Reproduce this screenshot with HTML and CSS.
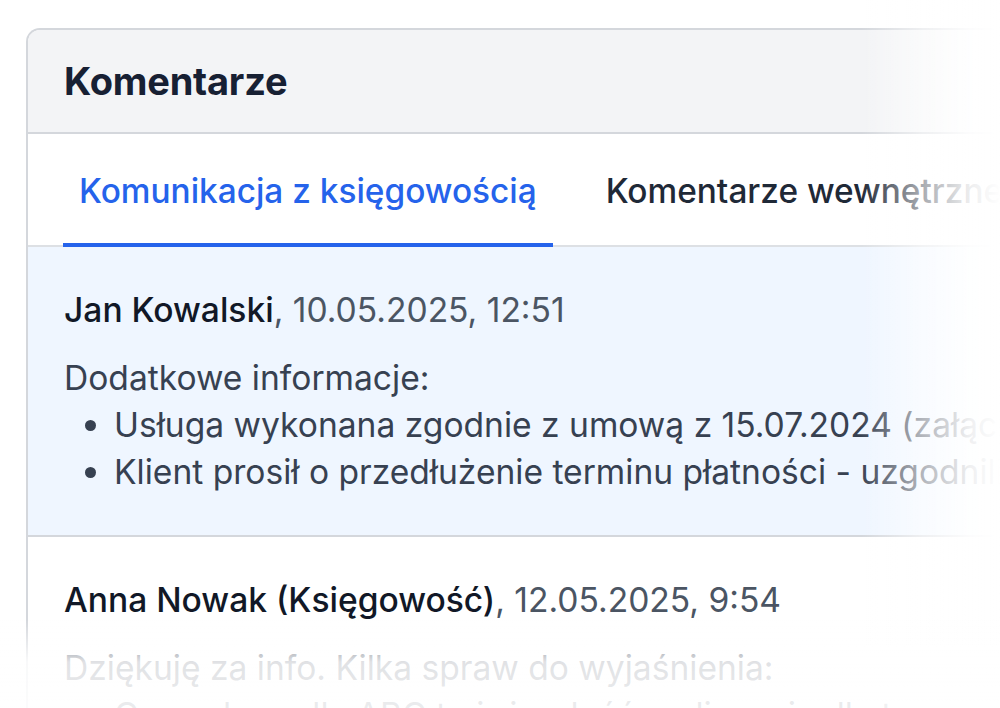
FILE: index.html
```html
<!DOCTYPE html>
<html lang="pl">
<head>
<meta charset="utf-8">
<title>Komentarze</title>
<link rel="stylesheet" href="styles.css">
</head>
<body>
<div class="page">
  <section class="card">
    <header class="card-header">
      <h2 class="title">Komentarze</h2>
    </header>
    <nav class="tabs">
      <div class="tab active">Komunikacja z księgowością</div>
      <div class="tab">Komentarze wewnętrzne</div>
    </nav>
    <div class="comments">
      <article class="comment highlighted">
        <p class="meta"><span class="author">Jan Kowalski</span>, 10.05.2025, 12:51</p>
        <div class="body">
          <p>Dodatkowe informacje:</p>
          <ul>
            <li>Usługa wykonana zgodnie z umową z 15.07.2024 (załącznik w dokumentach)</li>
            <li>Klient prosił o przedłużenie terminu płatności - uzgodniliśmy 30 dni</li>
          </ul>
        </div>
      </article>
      <article class="comment">
        <p class="meta"><span class="author">Anna Nowak (Księgowość)</span>, 12.05.2025, 9:54</p>
        <div class="body">
          <p>Dziękuję za info. Kilka spraw do wyjaśnienia:</p>
          <ul>
            <li>Czy usługa dla ABC to już całość rozliczenia dla tego projektu?</li>
          </ul>
        </div>
      </article>
    </div>
  </section>
</div>
<div class="fade-right"></div>
<div class="fade-bottom"></div>
</body>
</html>
```
FILE: styles.css
```css
* { box-sizing: border-box; }
html, body {
  margin: 0;
  padding: 0;
  background: #ffffff;
  overflow: hidden;
  height: 708px;
}
body {
  font-family: Inter, "Noto Sans", sans-serif;
  color: #1f2937;
}
.page {
  padding: 28px 0 0 26px;
  width: 1300px;
}
.card {
  width: 1250px;
  border: 2px solid #d4d7dc;
  border-right: none;
  border-radius: 14px 0 0 0;
  overflow: hidden;
  background: #ffffff;
}
.card-header {
  background: #f3f4f6;
  height: 104px;
  display: flex;
  align-items: center;
  padding: 0 36px;
  border-bottom: 2px solid #d4d7dc;
}
.title {
  margin: 0;
  font-size: 38px;
  font-weight: 700;
  color: #172033;
  letter-spacing: -0.2px;
}
.tabs {
  display: flex;
  gap: 37px;
  padding: 0 35px;
  height: 113px;
  border-bottom: 2px solid #dde0e4;
  align-items: stretch;
}
.tab {
  display: flex;
  align-items: center;
  padding: 4px 16px 0;
  font-size: 33.4px;
  font-weight: 500;
  color: #1f2937;
  margin-bottom: -2px;
  border-bottom: 4px solid transparent;
  white-space: nowrap;
}
.tab.active {
  color: #2563eb;
  border-bottom-color: #2563eb;
}
.comment {
  padding: 39px 36px 40px;
  border-bottom: 2px solid #d4d7dc;
  font-size: 33.6px;
  line-height: 47px;
  white-space: nowrap;
}
.comment.highlighted {
  background: #eff6ff;
}
.meta {
  margin: 0 0 21px;
  color: #4b5563;
}
.author {
  color: #111827;
  font-weight: 500;
}
.body {
  color: #374151;
}
.body p {
  margin: 0;
}
.body ul {
  margin: 0;
  padding-left: 50px;
}
.body li::marker {
  color: #374151;
}
.fade-right {
  position: fixed;
  top: 0;
  right: 0;
  width: 140px;
  height: 708px;
  background: linear-gradient(to right, rgba(255,255,255,0), rgba(255,255,255,0.6) 60px, rgba(255,255,255,0.92) 110px, #ffffff 140px);
  pointer-events: none;
}
.fade-bottom {
  position: fixed;
  left: 0;
  bottom: 0;
  width: 1000px;
  height: 88px;
  background: linear-gradient(to bottom, rgba(255,255,255,0), rgba(255,255,255,0.85) 42px, rgba(255,255,255,0.9) 88px);
  pointer-events: none;
}
```
